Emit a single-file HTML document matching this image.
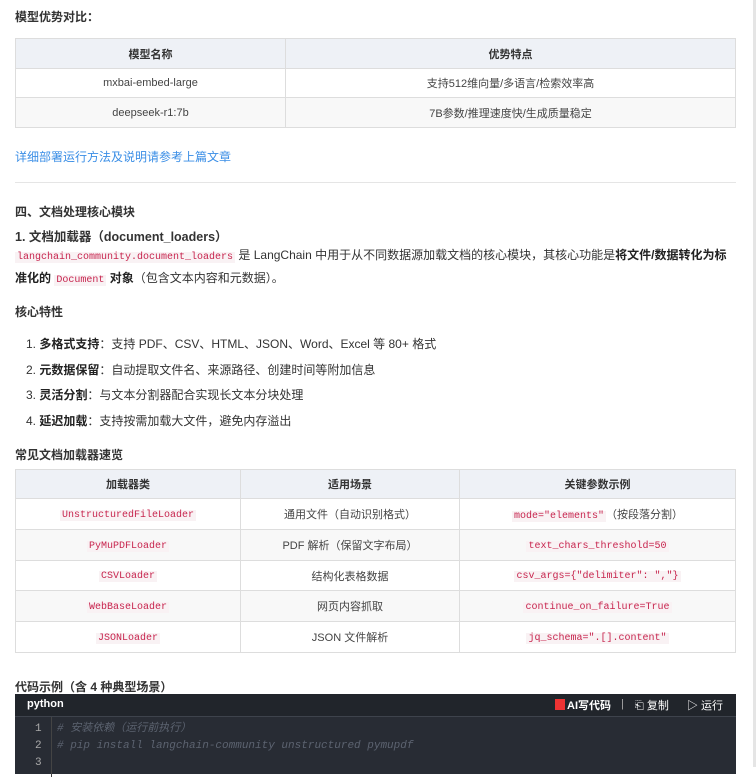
<!DOCTYPE html>
<html><head><meta charset="utf-8"><style>
body{margin:0;width:756px;height:767px;overflow:hidden;background:#fff;font-family:"Liberation Sans","Noto Sans CJK SC",sans-serif;color:#333;font-size:12px;position:relative}
.a{position:absolute}
table{border-collapse:collapse;position:absolute;left:15px;width:721px;font-size:11px;color:#444}
td,th{border:1px solid #ddd;text-align:center;padding:0}
th{background:#eef1f6;font-weight:bold;color:#333}
tr.g td{background:#f8f8f8}
code{font-family:"Liberation Mono",monospace;color:#c7254e;background:#f9f2f4;font-size:10px;padding:0 2px;font-weight:normal}
b{color:#222}
.sb{position:absolute;right:0;top:0;width:3px;height:767px;background:#e5e5e5}
</style></head><body>
<div class="sb"></div>
<div class="a" style="left:15px;top:8px;font-weight:bold;font-size:12px">模型优势对比：</div>
<table style="top:38px">
<tr style="height:30px"><th style="width:269px">模型名称</th><th>优势特点</th></tr>
<tr style="height:29px"><td>mxbai-embed-large</td><td>支持512维向量/多语言/检索效率高</td></tr>
<tr class="g" style="height:30px"><td>deepseek-r1:7b</td><td>7B参数/推理速度快/生成质量稳定</td></tr>
</table>
<div class="a" style="left:15px;top:148px;color:#3a8ee6;font-size:12px">详细部署运行方法及说明请参考上篇文章</div>
<div class="a" style="left:15px;top:182px;width:721px;height:1px;background:#e5e5e5"></div>
<div class="a" style="left:15px;top:203px;font-weight:bold">四、文档处理核心模块</div>
<div class="a" style="left:15px;top:226px;font-weight:bold;font-size:12.5px">1. 文档加载器（document_loaders）</div>
<div class="a" style="left:15px;top:245px;width:712px;line-height:20px;font-size:12px"><code>langchain_community.document_loaders</code> 是 LangChain 中用于从不同数据源加载文档的核心模块，其核心功能是<b>将文件/数据转化为标准化的 <code>Document</code> 对象</b>（包含文本内容和元数据）。</div>
<div class="a" style="left:15px;top:303px;font-weight:bold">核心特性</div>
<div class="a" style="left:26px;top:332px;line-height:25.7px">1. <b>多格式支持</b>：支持 PDF、CSV、HTML、JSON、Word、Excel 等 80+ 格式<br>2. <b>元数据保留</b>：自动提取文件名、来源路径、创建时间等附加信息<br>3. <b>灵活分割</b>：与文本分割器配合实现长文本分块处理<br>4. <b>延迟加载</b>：支持按需加载大文件，避免内存溢出</div>
<div class="a" style="left:15px;top:446px;font-weight:bold">常见文档加载器速览</div>
<table style="top:469px">
<tr style="height:29px"><th style="width:224px">加载器类</th><th style="width:218px">适用场景</th><th>关键参数示例</th></tr>
<tr style="height:31px"><td><code>UnstructuredFileLoader</code></td><td>通用文件（自动识别格式）</td><td><code>mode="elements"</code>（按段落分割）</td></tr>
<tr class="g" style="height:31px"><td><code>PyMuPDFLoader</code></td><td>PDF 解析（保留文字布局）</td><td><code>text_chars_threshold=50</code></td></tr>
<tr style="height:30px"><td><code>CSVLoader</code></td><td>结构化表格数据</td><td><code>csv_args={"delimiter": ","}</code></td></tr>
<tr class="g" style="height:31px"><td><code>WebBaseLoader</code></td><td>网页内容抓取</td><td><code>continue_on_failure=True</code></td></tr>
<tr style="height:31px"><td><code>JSONLoader</code></td><td>JSON 文件解析</td><td><code>jq_schema=".[].content"</code></td></tr>
</table>
<div class="a" style="left:15px;top:678px;font-weight:bold">代码示例（含 4 种典型场景）</div>
<div class="a" style="left:15px;top:694px;width:721px;height:80px;background:#282c34;border-radius:3px 3px 0 0">
<div class="a" style="left:0;top:0;width:721px;height:22px;border-bottom:1px solid #3e434c;background:#21252b"></div>
<div class="a" style="left:12px;top:4px;color:#fff;font-weight:bold;font-size:11px">python</div>
<div class="a" style="left:540px;top:5px;width:10px;height:11px;background:#e33"></div>
<div class="a" style="left:552px;top:3px;color:#fff;font-size:11px;font-weight:bold">AI写代码</div>
<div class="a" style="left:606px;top:4px;color:#aaa;font-size:11px">|</div>
<div class="a" style="left:620px;top:3px;color:#fff;font-size:11px">⎗ 复制</div>
<div class="a" style="left:672px;top:3px;color:#fff;font-size:11px">▷ 运行</div>
<div class="a" style="left:0;top:23px;width:36px;height:60px;border-right:1px solid #444"></div>
<div class="a" style="left:20px;top:27px;color:#aaa;font-size:11px;line-height:17px;font-family:'Liberation Mono',monospace">1<br>2<br>3</div>
<div class="a" style="left:42px;top:27px;color:#5c6370;font-style:italic;font-size:11px;line-height:17px;font-family:'Liberation Mono','Noto Sans CJK SC',monospace"># 安装依赖（运行前执行）<br># pip install langchain-community unstructured pymupdf</div>
</div>
</body></html>
